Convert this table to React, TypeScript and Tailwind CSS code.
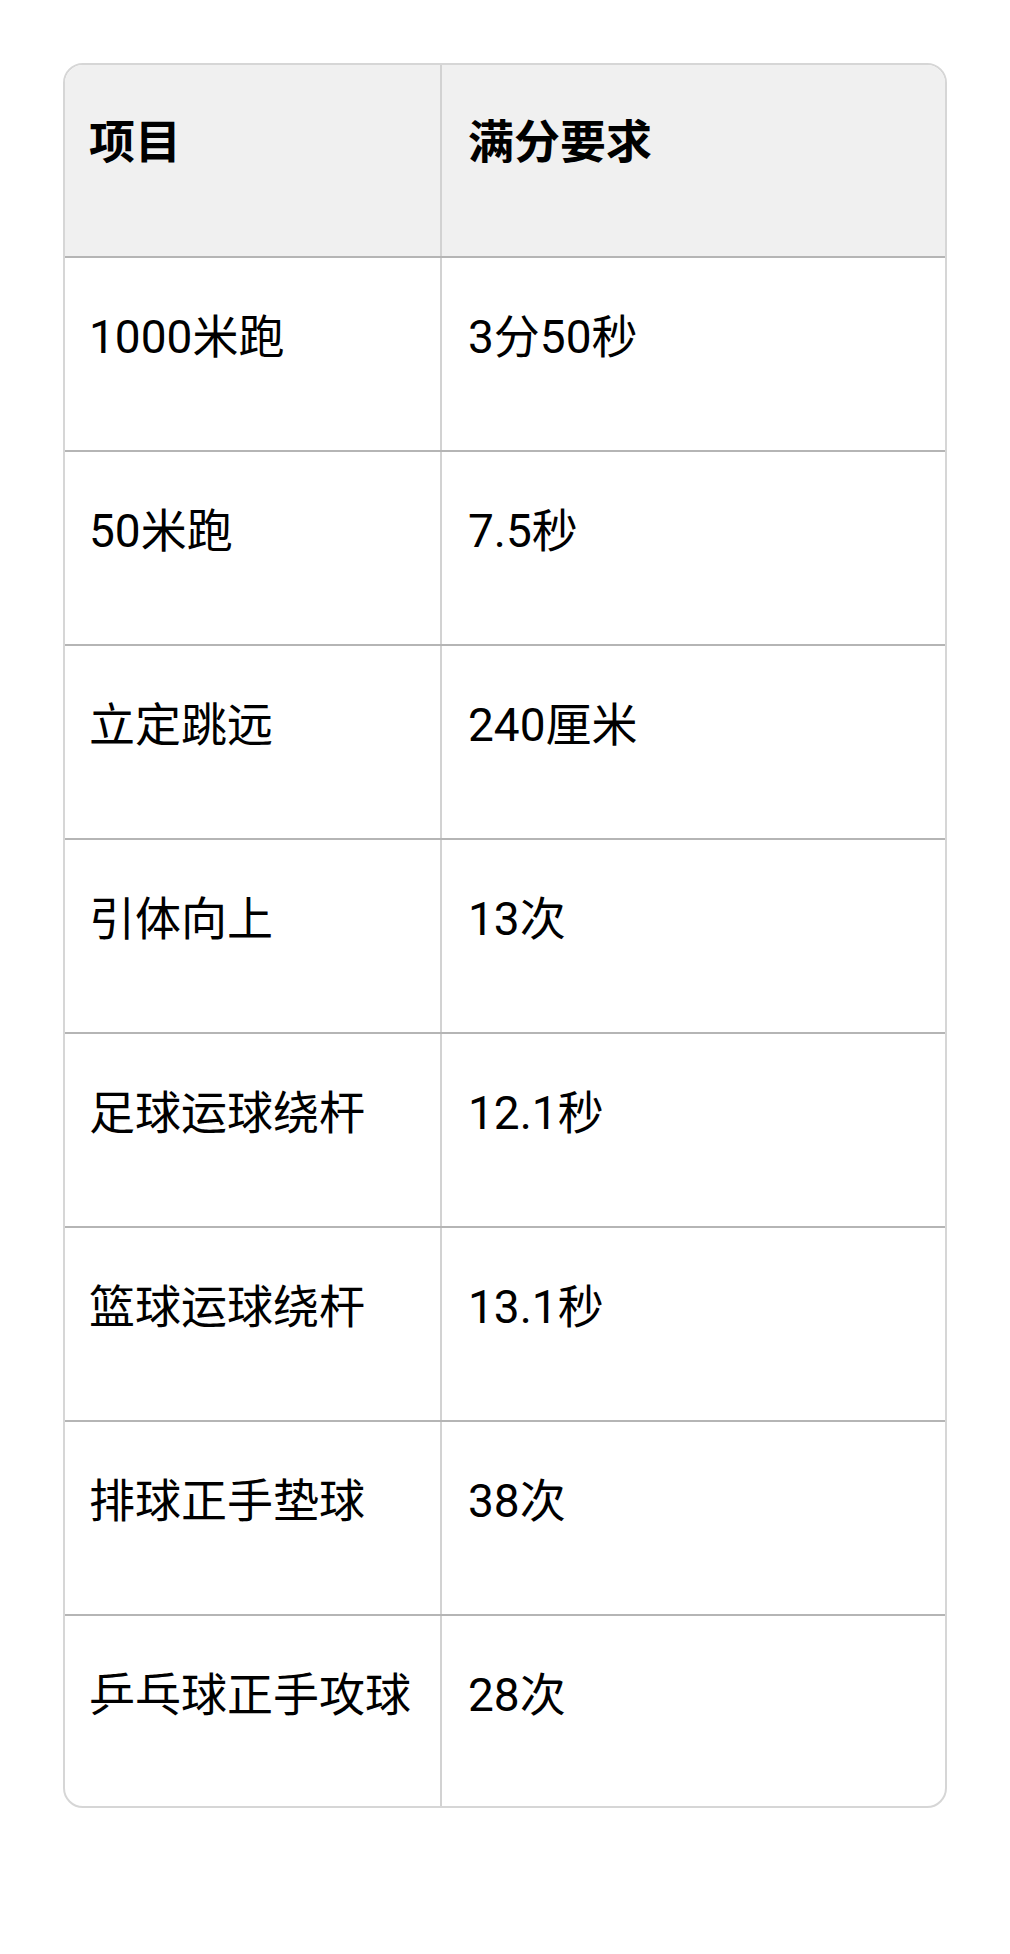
const rows: [string, string][] = [
  ['1000米跑', '3分50秒'],
  ['50米跑', '7.5秒'],
  ['立定跳远', '240厘米'],
  ['引体向上', '13次'],
  ['足球运球绕杆', '12.1秒'],
  ['篮球运球绕杆', '13.1秒'],
  ['排球正手垫球', '38次'],
  ['乒乓球正手攻球', '28次'],
];

const font = { fontFamily: 'Roboto, "Noto Sans CJK SC", sans-serif' };

export default function App() {
  return (
    <div className="min-h-[1954px] w-[1010px] bg-white pt-[63px] pl-[63px]" style={font}>
      <div className="w-[884px] overflow-hidden rounded-[20px] border-2 border-[#d6d6d6] text-[46px] leading-[1.5] text-black">
        <div className="grid h-[193px] grid-cols-[377px_1fr] border-b-2 border-[#b5b5b5] bg-[#f0f0f0] font-bold">
          <div className="border-r-2 border-[#d2d2d2] pl-[24px] pt-[43px]">项目</div>
          <div className="pl-[26px] pt-[43px]">满分要求</div>
        </div>
        {rows.map(([item, req], i) => {
          const last = i === rows.length - 1;
          return (
            <div
              key={item}
              className={
                last
                  ? 'grid h-[190px] grid-cols-[377px_1fr]'
                  : 'grid h-[194px] grid-cols-[377px_1fr] border-b-2 border-[#b5b5b5]'
              }
            >
              <div className="border-r-2 border-[#d2d2d2] pl-[24px] pt-[45px]">{item}</div>
              <div className="pl-[26px] pt-[45px]">{req}</div>
            </div>
          );
        })}
      </div>
    </div>
  );
}
